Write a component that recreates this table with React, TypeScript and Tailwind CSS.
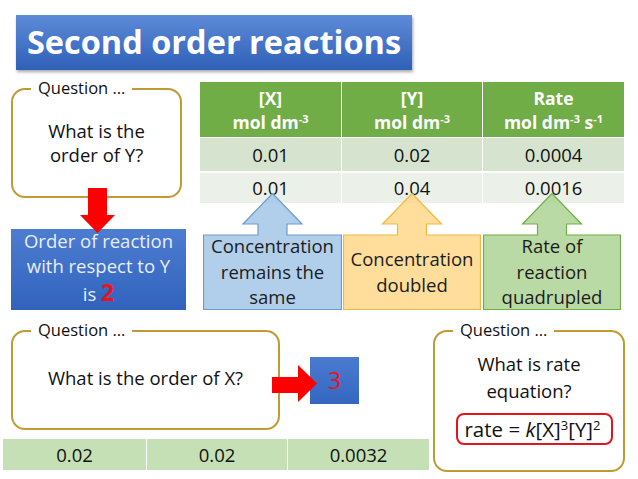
const font = { fontFamily: "'Open Sans', Lato, 'Liberation Sans', sans-serif" };

const QuestionBox = ({ className, children }: { className: string; children: React.ReactNode }) => (
  <div className={`relative rounded-[14px] border-2 border-[#c09b34] bg-white ${className}`}>
    <span className="absolute -top-[13px] left-[18px] bg-white px-[7px] text-[16.5px] leading-[22px] text-[#111]">
      Question …
    </span>
    {children}
  </div>
);

const Callout = ({
  fill,
  stroke,
  width,
  children,
}: {
  fill: string;
  stroke: string;
  width: number;
  children: React.ReactNode;
}) => {
  const cx = width / 2;
  const r = width - 0.5;
  const d = `M0.5,42 H${cx - 14.5} V31 H${cx - 29.5} L${cx},0.5 L${cx + 29.5},31 H${cx + 14.5} V42 H${r} V116.5 H0.5 Z`;
  return (
    <div className="relative h-[117px]" style={{ width }}>
      <svg className="absolute inset-0" width={width} height={117}>
        <path d={d} fill={fill} fillOpacity={0.8} stroke={stroke} strokeWidth={1.2} />
      </svg>
      <div className="relative flex h-full flex-col items-center justify-center pt-[40px] text-center text-[18.5px] leading-[25.5px] text-[#1c1c1c]">
        {children}
      </div>
    </div>
  );
};

const Unit = ({ rate }: { rate?: boolean }) => (
  <span>
    mol dm<sup className="text-[11px]">-3</sup>
    {rate && (
      <>
        {" "}s<sup className="text-[11px]">-1</sup>
      </>
    )}
  </span>
);

export default function App() {
  return (
    <div className="h-[479px] w-[638px] overflow-hidden bg-white" style={font}>
      <div className="pl-[16px] pt-[15px]">
        <div className="flex h-[55px] w-[396px] items-center justify-center bg-gradient-to-b from-[#5d8bd9] to-[#2f60b8] shadow-[1px_2px_3px_rgba(0,0,0,0.35)]">
          <span className="text-[32.5px] font-bold leading-none text-white">Second order reactions</span>
        </div>
      </div>

      <div className="flex pt-[12px]">
        <div className="ml-[11px] flex w-[175px] flex-col">
          <QuestionBox className="mt-[6px] h-[110px] w-[171px]">
            <div className="flex h-full flex-col items-center justify-center text-[18.5px] leading-[24px] text-[#111]">
              <span>What is the</span>
              <span>order of Y?</span>
            </div>
          </QuestionBox>
          <svg className="relative z-10 -mt-[10px] ml-[68px]" width={37} height={45}>
            <path d="M9,0 H28 V27 H36 L18.5,45 L1,27 H9 Z" fill="#f00" />
          </svg>
          <div className="-mt-[4px] flex h-[81px] w-[175px] flex-col items-center justify-center bg-gradient-to-b from-[#4d7dd1] to-[#3163bd] pb-[5px] text-[18.5px] leading-[25px] text-[#e8eef8]">
            <span>Order of reaction</span>
            <span>with respect to Y</span>
            <span className="mt-[2px]">
              is <span className="text-[23px] font-bold text-[#e8141c]">2</span>
            </span>
          </div>
        </div>

        <div className="ml-[14px] flex w-[424px] flex-col">
          <div className="grid grid-cols-[142px_141px_141px] bg-[#70ad47] text-center text-[17.5px] font-bold leading-[24px] text-white">
            <div className="flex h-[55px] flex-col items-center justify-center border-r border-white">
              <span>[X]</span>
              <Unit />
            </div>
            <div className="flex h-[55px] flex-col items-center justify-center border-r border-white">
              <span>[Y]</span>
              <Unit />
            </div>
            <div className="flex h-[55px] flex-col items-center justify-center">
              <span>Rate</span>
              <Unit rate />
            </div>
          </div>
          <div className="grid grid-cols-[142px_141px_141px] border-t border-white bg-[#d6e4cf] text-center text-[18.5px] text-[#111]">
            <div className="flex h-[33px] items-center justify-center border-r border-white">0.01</div>
            <div className="flex h-[33px] items-center justify-center border-r border-white">0.02</div>
            <div className="flex h-[33px] items-center justify-center">0.0004</div>
          </div>
          <div className="grid grid-cols-[142px_141px_141px] border-t-2 border-white bg-[#ebf1e9] text-center text-[18.5px] text-[#111]">
            <div className="flex h-[30px] items-center justify-center border-r border-white">0.01</div>
            <div className="flex h-[30px] items-center justify-center border-r border-white">0.04</div>
            <div className="flex h-[30px] items-center justify-center">0.0016</div>
          </div>
          <div className="-mt-[10px] ml-[3px] flex gap-[1px]">
            <Callout fill="#9dc3e6" stroke="#6b9bd2" width={139}>
              <span>Concentration</span>
              <span>remains the</span>
              <span>same</span>
            </Callout>
            <Callout fill="#ffd481" stroke="#f2b940" width={138}>
              <span>Concentration</span>
              <span>doubled</span>
            </Callout>
            <div className="ml-[1px]">
              <Callout fill="#a9d18e" stroke="#70ad47" width={138}>
                <span>Rate of</span>
                <span>reaction</span>
                <span>quadrupled</span>
              </Callout>
            </div>
          </div>
        </div>
      </div>

      <div className="flex pt-[20px]">
        <div className="ml-[3px] flex w-[426px] flex-col">
          <div className="flex items-center">
            <QuestionBox className="ml-[8px] h-[100px] w-[269px]">
              <div className="flex h-full items-center justify-center pb-[4px] text-[18.5px] text-[#111]">
                What is the order of X?
              </div>
            </QuestionBox>
            <svg className="relative z-10 -ml-[8px] mt-[6px]" width={45} height={37}>
              <path d="M0,12 H26 V0 L45,18.5 L26,37 V28 H0 Z" fill="#f00" />
            </svg>
            <div className="-ml-[7px] flex h-[47px] w-[49px] items-center justify-center bg-gradient-to-b from-[#4b7bd0] to-[#3566c0]">
              <span className="text-[23px] text-[#e8141c]">3</span>
            </div>
          </div>
          <div className="mt-[9px] grid h-[31px] grid-cols-[144px_141px_141px] bg-[#c5e0b4] text-center text-[18.5px] text-[#111]">
            <div className="flex items-center justify-center border-r border-white">0.02</div>
            <div className="flex items-center justify-center border-r border-white">0.02</div>
            <div className="flex items-center justify-center">0.0032</div>
          </div>
        </div>

        <QuestionBox className="ml-[4px] h-[142px] w-[192px]">
          <div className="flex flex-col items-center pt-[18px] text-[18.5px] leading-[27px] text-[#111]">
            <span>What is rate</span>
            <span>equation?</span>
            <div className="ml-[10px] mt-[9px] flex h-[32px] w-[157px] items-center justify-center rounded-[8px] border-2 border-[#e3141c] pr-[3px] text-[20.5px] leading-none">
              <span>
                rate = <i>k</i>[X]<sup className="text-[13px]">3</sup>[Y]<sup className="text-[13px]">2</sup>
              </span>
            </div>
          </div>
        </QuestionBox>
      </div>
    </div>
  );
}
